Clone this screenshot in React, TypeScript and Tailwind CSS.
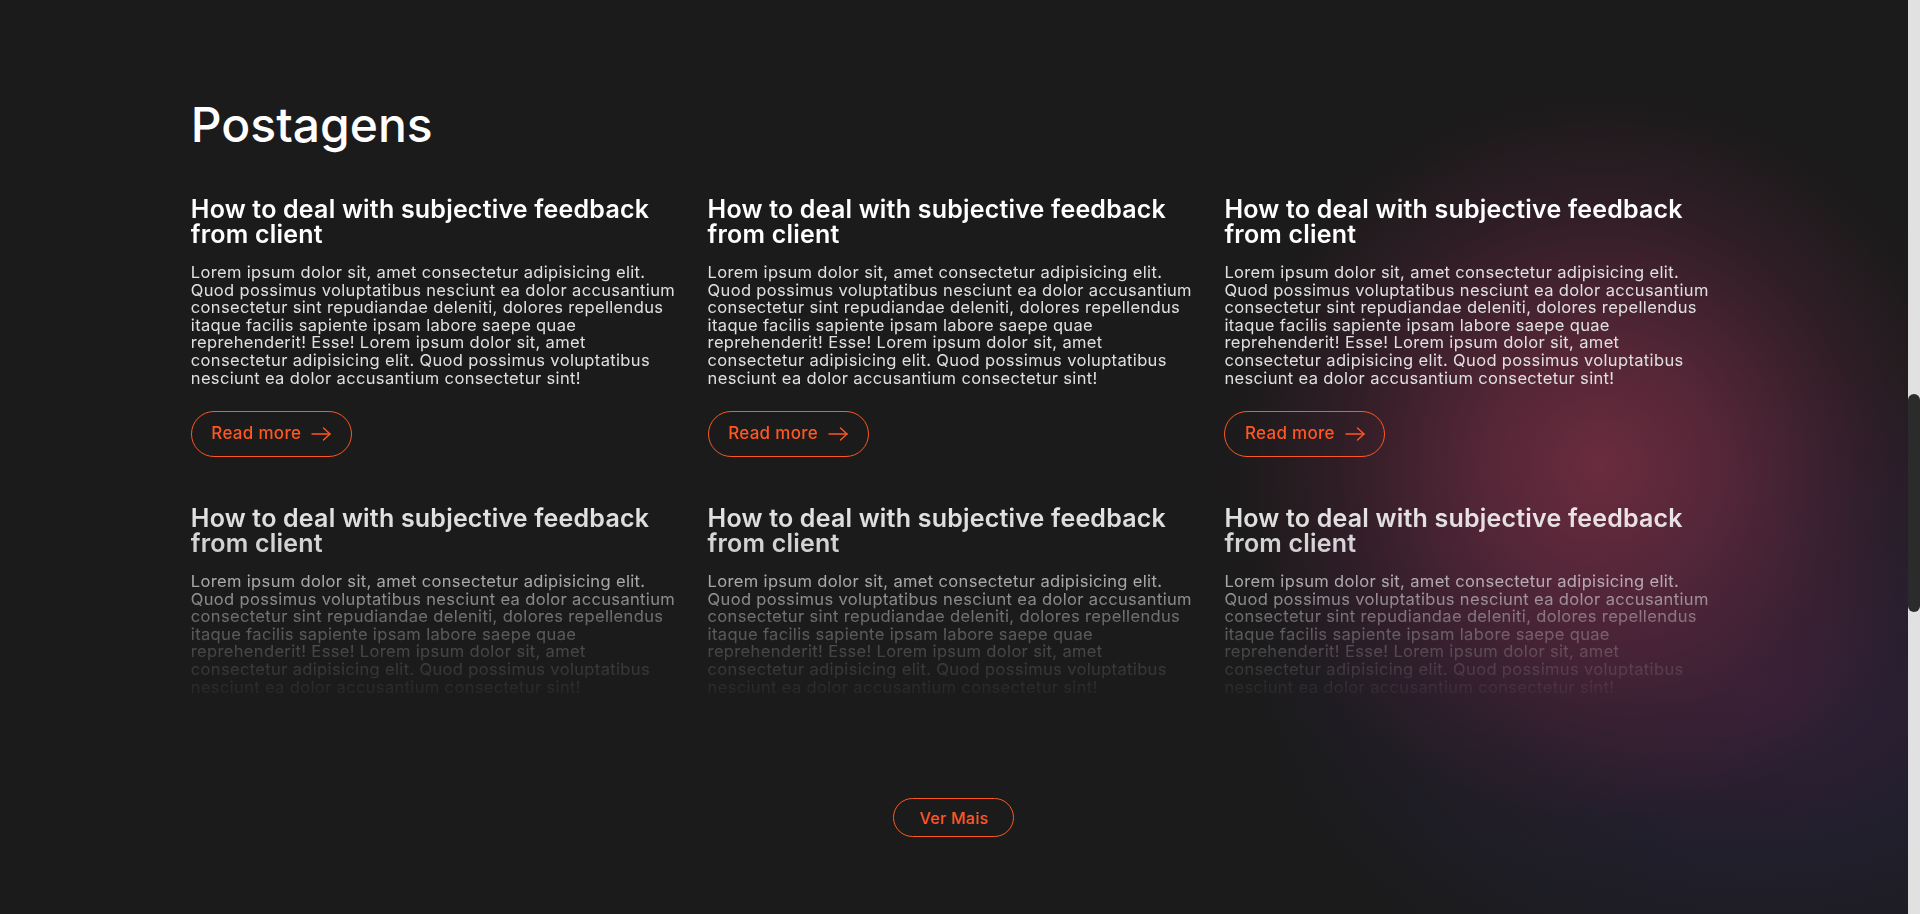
import React from "react";

const BODY_LINES = [
  "Lorem ipsum dolor sit, amet consectetur adipisicing elit.",
  "Quod possimus voluptatibus nesciunt ea dolor accusantium",
  "consectetur sint repudiandae deleniti, dolores repellendus",
  "itaque facilis sapiente ipsam labore saepe quae",
  "reprehenderit! Esse! Lorem ipsum dolor sit, amet",
  "consectetur adipisicing elit. Quod possimus voluptatibus",
  "nesciunt ea dolor accusantium consectetur sint!",
];

function Arrow() {
  return (
    <svg width="20" height="14" viewBox="0 0 20 14" fill="none" stroke="currentColor" strokeWidth="1.4" strokeLinecap="round" strokeLinejoin="round">
      <path d="M1 7h18" />
      <path d="M12.5 1l6.5 6-6.5 6" />
    </svg>
  );
}

function Post() {
  return (
    <article className="flex flex-col items-start">
      <h2 className="text-[25px] leading-[25px] font-semibold text-white tracking-[0.2px]">
        How to deal with subjective feedback
        <br />
        from client
      </h2>
      <p className="mt-[17px] text-[16.5px] leading-[17.6px] tracking-[0.35px] text-[#e0e0e0] whitespace-nowrap">
        {BODY_LINES.map((l, i) => (
          <React.Fragment key={i}>
            {l}
            {i < BODY_LINES.length - 1 && <br />}
          </React.Fragment>
        ))}
      </p>
      <button className="mt-[24px] flex h-[46px] w-[161px] items-center justify-center gap-[10px] rounded-full border border-[#ff5722] text-[17px] font-medium tracking-[0.3px] text-[#ff5722]">
        <span>Read more</span>
        <Arrow />
      </button>
    </article>
  );
}

export default function App() {
  return (
    <div className="flex min-h-[914px] bg-[#1b1b1b] font-['Inter',sans-serif] antialiased">
      <main className="flex-1 h-[914px] overflow-hidden bg-[radial-gradient(circle_420px_at_1600px_465px,rgba(106,44,62,1)_0%,rgba(96,40,60,0.8)_30%,rgba(72,32,50,0.45)_62%,rgba(40,26,34,0.15)_85%,transparent_100%),radial-gradient(ellipse_520px_340px_at_1760px_690px,rgba(58,34,66,0.8)_0%,rgba(34,32,50,0.7)_50%,transparent_100%)]">
        <section className="mx-auto w-[80%] pt-[101px]">
          <h1 className="text-[48px] leading-[48px] font-medium text-white">Postagens</h1>
          <div className="mt-[48px] grid h-[570px] grid-cols-3 gap-x-6 gap-y-[48px] overflow-hidden [mask-image:linear-gradient(to_bottom,#000_273px,rgba(0,0,0,.87)_318px,rgba(0,0,0,.72)_385px,rgba(0,0,0,.42)_420px,rgba(0,0,0,.22)_455px,rgba(0,0,0,.08)_490px,transparent_523px)]">
            {Array.from({ length: 6 }).map((_, i) => (
              <Post key={i} />
            ))}
          </div>
          <div className="mt-[31px] flex justify-center">
            <button className="flex h-[39px] w-[121px] items-center justify-center rounded-full border border-[#ff5722] text-[16px] font-medium tracking-[0.3px] text-[#ff5722]">
              Ver Mais
            </button>
          </div>
        </section>
      </main>
      <div className="w-3 shrink-0 bg-[#e1e1e1] pt-[394px]">
        <div className="h-[218px] rounded-full bg-[#2b2b2b]" />
      </div>
    </div>
  );
}
